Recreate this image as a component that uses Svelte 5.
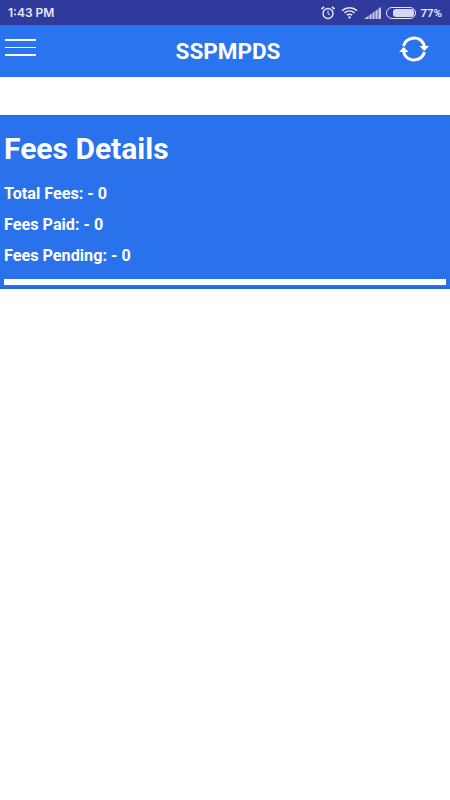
<script>
	let rows = [
		{ label: 'Total Fees', value: 0 },
		{ label: 'Fees Paid', value: 0 },
		{ label: 'Fees Pending', value: 0 }
	];
</script>

<div class="page">
	<div class="statusbar">
		<span class="time">1:43 PM</span>
		<div class="status-right">
			<svg class="alarm" width="16" height="16" viewBox="0 0 16 16" fill="none" stroke="#e6e8f6">
				<circle cx="8" cy="8.500" r="5" stroke-width="1.400" />
				<path d="M8 5.500v3.200l2 1" stroke-width="1" />
				<path d="M1.500 4.200 4 1.800M14.500 4.200 12 1.800" stroke-width="1.600" />
			</svg>
			<svg class="wifi" width="17" height="13" viewBox="0 0 17 13" fill="none" stroke="#e6e8f6" stroke-width="1.500">
				<path d="M1 4.600C5.300.8 11.700.8 16 4.600" />
				<path d="M3.400 7C6.400 4.400 10.600 4.400 13.600 7" />
				<path d="M5.800 9.200C7.400 8 9.600 8 11.200 9.200" />
				<circle cx="8.500" cy="11.400" r="1.200" fill="#e6e8f6" stroke="none" />
			</svg>
			<svg class="signal" width="17" height="12" viewBox="0 0 17 12">
				<path d="M0 12 17 0v12z" fill="#c9cce8" />
				<path d="M5 12V8M8 12V6M11 12V4M14 12V2" stroke="#303a9c" stroke-width="0.800" fill="none" />
			</svg>
			<div class="battery"><div class="battery-fill"></div></div>
			<span class="percent">77%</span>
		</div>
	</div>

	<header class="toolbar">
		<div class="menu">
			<span></span>
			<span></span>
			<span></span>
		</div>
		<div class="title">SSPMPDS</div>
		<svg class="refresh" width="32" height="32" viewBox="0 0 32 32" fill="none" stroke="#fff" stroke-width="3">
			<path d="M5.500 13A11 11 0 0 1 25.500 10.500l.8 3" />
			<path d="M26.500 19A11 11 0 0 1 6.500 21.500l-.8-3" />
			<path d="M21.500 13h9.500l-4.700 5z" fill="#fff" stroke="none" />
			<path d="M1 19h9.500l-4.800-5z" fill="#fff" stroke="none" />
		</svg>
	</header>

	<section class="card">
		<h1>Fees Details</h1>
		{#each rows as row}
			<p>{row.label}: - {row.value}</p>
		{/each}
		<div class="bar"></div>
	</section>
</div>

<style>
	:global(body) {
		background: #fff;
		font-family: Roboto, sans-serif;
	}

	.page {
		width: 450px;
		height: 800px;
		background: #fff;
		overflow: hidden;
	}

	.statusbar {
		height: 25px;
		background: #303a9c;
		display: flex;
		align-items: center;
		justify-content: space-between;
		padding: 0 8px;
		box-sizing: border-box;
		color: #e6e8f6;
		font-family: Inter, Roboto, sans-serif;
		font-size: 12px;
		font-weight: 600;
	}

	.status-right {
		display: flex;
		align-items: center;
	}

	.alarm {
		margin-right: 5px;
	}

	.wifi {
		margin-right: 6px;
	}

	.signal {
		margin-right: 5px;
	}

	.battery {
		width: 26px;
		height: 8px;
		border: 1.500px solid #e6e8f6;
		border-radius: 6px;
		padding: 1px;
		margin-right: 4px;
	}

	.battery-fill {
		width: 82%;
		height: 100%;
		background: #d5d8ee;
		border-radius: 3px;
		margin-left: auto;
	}

	.percent {
		font-family: Roboto, sans-serif;
		font-size: 11.500px;
	}

	.toolbar {
		height: 52px;
		background: #2a74f0;
		display: flex;
		align-items: center;
		justify-content: space-between;
		position: relative;
		padding: 0 20px 0 5px;
	}

	.menu {
		width: 31px;
		display: flex;
		flex-direction: column;
		gap: 6px;
		margin-top: -7px;
	}

	.menu span {
		display: block;
		height: 1.500px;
		background: #fff;
	}

	.title {
		position: absolute;
		left: 6px;
		right: 0;
		text-align: center;
		color: #fff;
		font-size: 22.500px;
		font-weight: 700;
	}

	.refresh {
		display: block;
		margin-top: -4px;
	}

	.card {
		margin-top: 38px;
		background: #2a72ec;
		border-top: 1px solid #1f66e8;
		border-bottom: 2px solid #1f66e8;
		padding: 0 4px 2px;
		height: 174px;
		box-sizing: border-box;
		color: #fff;
		display: flex;
		flex-direction: column;
	}

	h1 {
		margin: 15px 0 0;
		font-size: 30px;
		line-height: 36px;
		font-weight: 700;
	}

	p {
		margin: 0;
		font-size: 16.200px;
		line-height: 31px;
		font-weight: 700;
	}

	p:first-of-type {
		margin-top: 11px;
	}

	.bar {
		margin-top: auto;
		height: 6px;
		background: #fff;
	}
</style>
